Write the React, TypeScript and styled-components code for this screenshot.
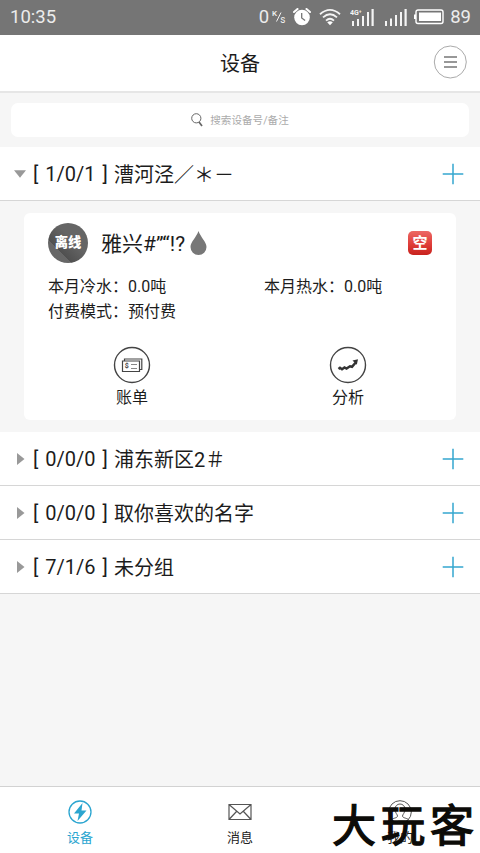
import React from "react";
import styled, { createGlobalStyle } from "styled-components";

const GlobalStyle = createGlobalStyle`
  * { box-sizing: border-box; }
  body {
    margin: 0;
    background: #f6f6f6;
    color: #1c1c1c;
    font-family: Roboto, "Noto Sans CJK SC", sans-serif;
  }
  svg { display: block; flex: none; }
`;

const Screen = styled.div`
  position: relative;
  display: flex;
  flex-direction: column;
  width: 480px;
  height: 853px;
  overflow: hidden;
  background: #f6f6f6;
`;

const StatusBar = styled.div`
  display: flex;
  justify-content: space-between;
  height: 35px;
  padding: 0 9px 2px 10px;
  align-items: center;
  background: #757575;
  color: #ececec;
  font-size: 18.5px;
`;

const StatusIcons = styled.div`
  display: flex;
  align-items: center;
`;

const Header = styled.header`
  display: grid;
  grid-template-columns: 60px 1fr 60px;
  align-items: center;
  height: 58px;
  background: #fff;
  border-bottom: 2px solid #e6e6e6;
`;

const Title = styled.h1`
  grid-column: 2;
  margin: 0;
  padding-top: 2px;
  font-size: 20px;
  font-weight: 400;
  line-height: 30px;
  text-align: center;
`;

const MenuButton = styled.button`
  display: block;
  margin: 0 0 2px 13px;
  padding: 0;
  width: 34px;
  height: 34px;
  border: 0;
  background: none;
`;

const SearchBox = styled.div`
  display: flex;
  align-items: center;
  justify-content: center;
  gap: 7px;
  height: 34px;
  margin: 10px 11px;
  border-radius: 7px;
  background: #fff;
  color: #ababab;
  font-size: 10.6px;
  line-height: 16px;
`;

const SearchHint = styled.span`
  padding-top: 1px;
`;

const GroupRow = styled.div`
  display: flex;
  align-items: center;
  height: 54px;
  padding: 0 16px 0 14px;
  background: #fff;
  border-bottom: 1px solid #d6d6d6;
  font-size: 20px;
  white-space: pre;
`;

const Arrow = styled.span`
  display: flex;
  width: 19px;
`;

const Count = styled.span`
  width: 81px;
  word-spacing: 2px;
`;

const GroupName = styled.span`
  flex: 1;
`;

const Card = styled.section`
  height: 207px;
  margin: 12px 24px;
  padding: 10px 24px 0;
  border-radius: 6px;
  background: #fff;
`;

const CardHead = styled.div`
  display: flex;
  align-items: center;
  height: 40px;
`;

const OfflineBadge = styled.span`
  display: flex;
  align-items: center;
  justify-content: center;
  width: 40px;
  height: 40px;
  margin-right: 13px;
  border-radius: 50%;
  background: linear-gradient(45deg, #676767 0 29%, #505050 30%, #656565 60%);
  color: #fff;
  font-size: 13.3px;
  font-weight: 900;
  line-height: 16px;
  padding-bottom: 1px;
`;

const DeviceName = styled.span`
  width: 89px;
  padding-bottom: 2px;
  font-size: 21px;
  white-space: nowrap;
`;

const EmptyTag = styled.span`
  display: flex;
  align-items: center;
  justify-content: center;
  width: 24px;
  height: 24px;
  margin-left: auto;
  padding-bottom: 1px;
  border-radius: 5px;
  background: linear-gradient(#ec6864, #df3d39 55%, #c8221d);
  color: #fff;
  font-size: 15px;
  font-weight: 700;
  line-height: 20px;
`;

const Facts = styled.div`
  display: grid;
  grid-template-columns: 216px 1fr;
  margin-top: 12px;
  font-size: 16px;
  line-height: 24.5px;
`;

const Actions = styled.div`
  display: grid;
  grid-template-columns: 1fr 1fr;
  margin: 22px -24px 0;
`;

const Action = styled.div`
  display: flex;
  flex-direction: column;
  align-items: center;
  gap: 2px;
  font-size: 16px;
  line-height: 24px;
`;

const TabBar = styled.nav`
  display: grid;
  grid-template-columns: repeat(3, 1fr);
  height: 67px;
  margin-top: auto;
  border-top: 1px solid #d2d2d2;
  background: #fff;
`;

const Tab = styled.div<{ $active?: boolean }>`
  display: flex;
  flex-direction: column;
  align-items: center;
  padding-top: 12px;
  color: ${(p) => (p.$active ? "#2ba5d0" : "#222")};
  font-size: 13px;
  line-height: 20px;
  gap: 3px;
`;

const Watermark = styled.div`
  position: absolute;
  left: 332px;
  top: 798px;
  width: 148px;
  color: #0c0b08;
  font-family: "Noto Sans CJK SC", sans-serif;
  font-size: 44px;
  font-weight: 400;
  line-height: 50px;
  letter-spacing: 5px;
  white-space: nowrap;
  -webkit-text-stroke: 1.3px #0c0b08;
  stroke-linejoin: round;
`;

const Clock = () => (
  <svg width="18" height="18" viewBox="0 0 18 18" fill="none">
    <circle cx="9" cy="9.5" r="7.8" fill="#fff" />
    <path d="M1 4 4.5 1M13.5 1 17 4" stroke="#fff" strokeWidth="2" strokeLinecap="round" />
    <path d="M8.7 5v5l3.4 2.5" stroke="#757575" strokeWidth="1.3" />
  </svg>
);

const Wifi = () => (
  <svg width="22" height="18" viewBox="0 0 22 18" fill="none" stroke="#f4f4f4" strokeWidth="1.8">
    <path d="M1 6.2Q11-2.5 21 6.2M4 9.4Q11 3 18 9.4M7 12.6Q11 9 15 12.6" />
    <path d="m8.2 14.3 2.8 3 2.8-3q-2.8-2-5.6 0Z" fill="#fff" stroke="none" />
  </svg>
);

const Bars = () => (
  <svg width="22" height="18" viewBox="0 0 22 18" fill="#f4f4f4">
    <path d="M0 13h2v5H0zM5 10.5h2V18H5zM10 7h2v11h-2zM15 4h2v14h-2zM19.5 1h2.2v17h-2.2z" />
  </svg>
);

const NetBars = () => (
  <svg width="24" height="18" viewBox="0 0 24 18" fill="#f4f4f4">
    <text x="0" y="6.5" fontSize="7" fontWeight="700">4G⁺</text>
    <path d="M2 13h2v5H2zM7 11h2v7H7zM12 8h2v10h-2zM17 4h2v14h-2zM21.5 1h2.2v17h-2.2z" />
  </svg>
);

const Battery = () => (
  <svg width="30" height="16" viewBox="0 0 30 16" fill="none">
    <rect x="2" y="1" width="27" height="13.5" rx="2" stroke="#fff" strokeWidth="1.4" />
    <path d="M5 3.5h22v8.5H5zM0 5.5h2v4.5H0z" fill="#fff" />
  </svg>
);

const Speed = () => (
  <svg width="14" height="16" viewBox="0 0 14 16" fill="#f0f0f0">
    <text x="0" y="7" fontSize="8" fontWeight="500">K</text>
    <path d="M4.5 12.5 9 3.5" stroke="#f0f0f0" />
    <text x="8.3" y="14" fontSize="10">s</text>
  </svg>
);

const Plus = () => (
  <svg width="22" height="22" viewBox="0 0 22 22" stroke="#35a7cf" strokeWidth="1.5">
    <path d="M.7 11h20.6M11 .7v20.6" />
  </svg>
);

const Triangle = ({ open }: { open?: boolean }) => (
  <svg width="13" height="14" viewBox="0 0 13 14" fill="#999">
    <path d={open ? "M0 3.3h12L6 10.7Z" : "M3 1v12l7.5-6Z"} />
  </svg>
);

const Drop = () => (
  <svg width="17" height="24" viewBox="0 0 17 24" fill="#777">
    <path d="M8.5 0C6.5 6 .5 11 .5 16a8 8 0 0 0 16 0C16.5 11 10.5 6 8.5 0Z" />
  </svg>
);

const BillIcon = () => (
  <svg width="38" height="38" viewBox="0 0 38 38" fill="none" stroke="#444">
    <circle cx="19" cy="19" r="17.5" strokeWidth="1.4" />
    <path d="M9.5 15h17v10.5h-17zM11.5 14.5V13h17.3v10.5H27" strokeWidth="1.2" />
    <path d="M18 18.5h6M18 22.5h6" stroke="#888" />
    <text x="11.8" y="22" fontSize="7" fontWeight="700" fill="#444" stroke="none">$</text>
  </svg>
);

const TrendIcon = () => (
  <svg width="38" height="38" viewBox="0 0 38 38" fill="none" stroke="#444">
    <circle cx="19" cy="19" r="17.5" strokeWidth="1.4" />
    <path d="m9.5 23 1.5-1.2 2 1.4 2.5-1.7 2 1 3.5-2.2 2 .5 3.5-4" stroke="#333" strokeWidth="2.5" />
    <path d="m23.5 14.5 5.5-1.3-1.2 5.6Z" fill="#333" stroke="none" />
  </svg>
);

const groups = [
  { count: "[ 0/0/0 ]", name: "浦东新区2＃" },
  { count: "[ 0/0/0 ]", name: "取你喜欢的名字" },
  { count: "[ 7/1/6 ]", name: "未分组" },
];

const Group = ({ count, name, open }: { count: string; name: string; open?: boolean }) => (
  <GroupRow>
    <Arrow><Triangle open={open} /></Arrow>
    <Count>{count}</Count>
    <GroupName>{name}</GroupName>
    <Plus />
  </GroupRow>
);

const StatusGap = styled.span<{ $w: number }>`
  width: ${(p) => p.$w}px;
`;

export default function App() {
  return (
    <>
      <GlobalStyle />
      <Screen>
        <StatusBar>
          <span>10:35</span>
          <StatusIcons>
            <span>0</span><StatusGap $w={3} />
            <Speed /><StatusGap $w={7} />
            <Clock /><StatusGap $w={8} />
            <Wifi /><StatusGap $w={9} />
            <NetBars /><StatusGap $w={11} />
            <Bars /><StatusGap $w={7} />
            <Battery /><StatusGap $w={6} />
            <span>89</span>
          </StatusIcons>
        </StatusBar>
        <Header>
          <Title>设备</Title>
          <MenuButton aria-label="菜单">
            <svg width="34" height="34" viewBox="0 0 34 34" fill="none">
              <circle cx="17.3" cy="17" r="16" stroke="#aaa" />
              <path d="M11 12h13M11 17h13M11 22h13" stroke="#777" strokeWidth="1.6" />
            </svg>
          </MenuButton>
        </Header>
        <SearchBox>
          <svg width="12" height="14" viewBox="0 0 12 14" fill="none" stroke="#666">
            <circle cx="5.3" cy="5.3" r="4.6" />
            <path d="m8 9 3 4" strokeWidth="1.7" />
          </svg>
          <SearchHint>搜索设备号/备注</SearchHint>
        </SearchBox>
        <Group count="[ 1/0/1 ]" name="漕河泾／＊－" open />
        <Card>
          <CardHead>
            <OfflineBadge>离线</OfflineBadge>
            <DeviceName>雅兴#”“!?</DeviceName>
            <Drop />
            <EmptyTag>空</EmptyTag>
          </CardHead>
          <Facts>
            <span>本月冷水：0.0吨</span>
            <span>本月热水：0.0吨</span>
            <span>付费模式：预付费</span>
          </Facts>
          <Actions>
            <Action><BillIcon />账单</Action>
            <Action><TrendIcon />分析</Action>
          </Actions>
        </Card>
        {groups.map((g) => <Group key={g.name} {...g} />)}
        <TabBar>
          <Tab $active>
            <svg width="26" height="26" viewBox="0 0 26 26" fill="none">
              <circle cx="13" cy="13" r="11" stroke="#2ba5d0" strokeWidth="1.3" />
              <path d="m15.5 4-8.5 10.500h5L10.5 22 19.5 11.500h-5Z" fill="#2ba5d0" />
            </svg>
            设备
          </Tab>
          <Tab>
            <svg width="26" height="26" viewBox="0 0 26 26" fill="none" stroke="#555">
              <path d="M2 5.5h22v15H2zl11 9.5 11-9.5M2 20.5l7.5-8M24 20.5l-7.5-8" strokeWidth="1.2" />
            </svg>
            消息
          </Tab>
          <Tab>
            <svg width="26" height="26" viewBox="0 0 26 26" fill="none" stroke="#555">
              <circle cx="13" cy="13" r="11.3" />
              <path d="M4.5 20.5c2-1.500 6-1.500 6-3.500 0-1.500-2.500-3-2.500-7a5 5 0 0 1 10 0c0 4-2.500 5.500-2.500 7 0 2 4 2 6 3.500" />
            </svg>
            我的
          </Tab>
        </TabBar>
        <Watermark>大玩客</Watermark>
      </Screen>
    </>
  );
}
